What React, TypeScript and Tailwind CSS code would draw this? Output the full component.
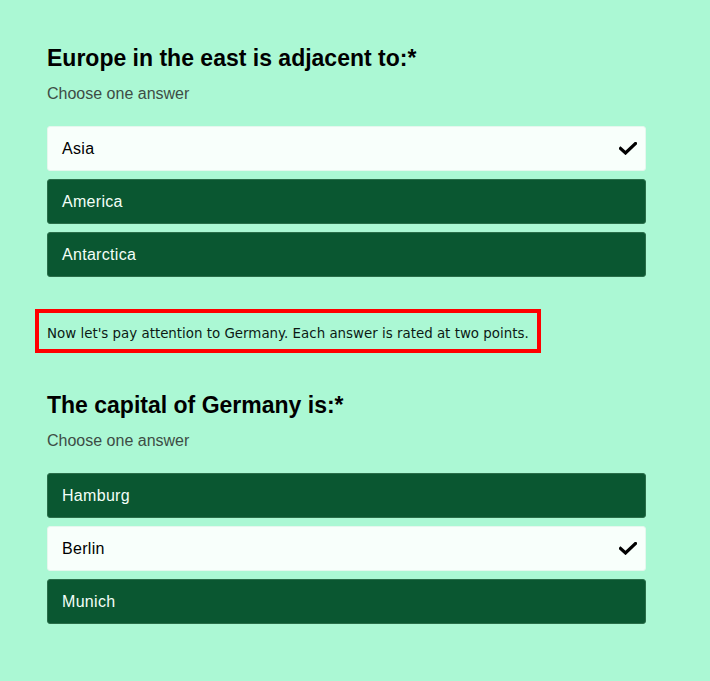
import React from "react";

type Question = {
  title: string;
  options: string[];
  selected: string;
};

const questions: Question[] = [
  {
    title: "Europe in the east is adjacent to:*",
    options: ["Asia", "America", "Antarctica"],
    selected: "Asia",
  },
  {
    title: "The capital of Germany is:*",
    options: ["Hamburg", "Berlin", "Munich"],
    selected: "Berlin",
  },
];

const Check = () => (
  <svg width="18" height="13" viewBox="0 0 18 13" fill="none">
    <path d="M1.5 6.5 L6.5 11 L16.5 1.5" stroke="#000" strokeWidth="3.2" strokeLinecap="square" />
  </svg>
);

const QuestionBlock: React.FC<{ q: Question }> = ({ q }) => (
  <div className="flex flex-col">
    <h2 className="text-[23px] leading-7 font-semibold text-black">{q.title}</h2>
    <p className="mt-[12px] text-[16px] leading-5 text-[#3d4d45]">Choose one answer</p>
    <div className="mt-[22px] flex flex-col gap-[8px]">
      {q.options.map((opt) =>
        opt === q.selected ? (
          <div
            key={opt}
            className="h-[45px] pl-[14px] pr-[8px] flex items-center justify-between rounded-[3px] bg-[#f8fffb] border border-[#e6f7ee] text-[16px] tracking-[0.3px] text-black"
          >
            <span>{opt}</span>
            <Check />
          </div>
        ) : (
          <div
            key={opt}
            className="h-[45px] px-[14px] flex items-center rounded-[3px] bg-[#0a5731] border border-[#2a6e4a] text-[16px] tracking-[0.3px] text-[#f3fff8]"
          >
            <span>{opt}</span>
          </div>
        )
      )}
    </div>
  </div>
);

export default function App() {
  return (
    <div className="min-h-[681px] bg-[#abf8d4] font-['Liberation_Sans',Arial,sans-serif]">
      <div className="w-[599px] ml-[47px] pt-[44px] pb-[57px] flex flex-col">
        <QuestionBlock q={questions[0]} />
        <div className="mt-[32px] -ml-[12px] w-[506px] h-[44px] border-[4px] border-[#ff0000] flex items-center pl-[8px]">
          <span className="font-['DejaVu_Sans',Verdana,sans-serif] text-[13.4px] text-[#0c1a14] pt-[7px]">
            Now let's pay attention to Germany. Each answer is rated at two points.
          </span>
        </div>
        <div className="mt-[38px]">
          <QuestionBlock q={questions[1]} />
        </div>
      </div>
    </div>
  );
}
